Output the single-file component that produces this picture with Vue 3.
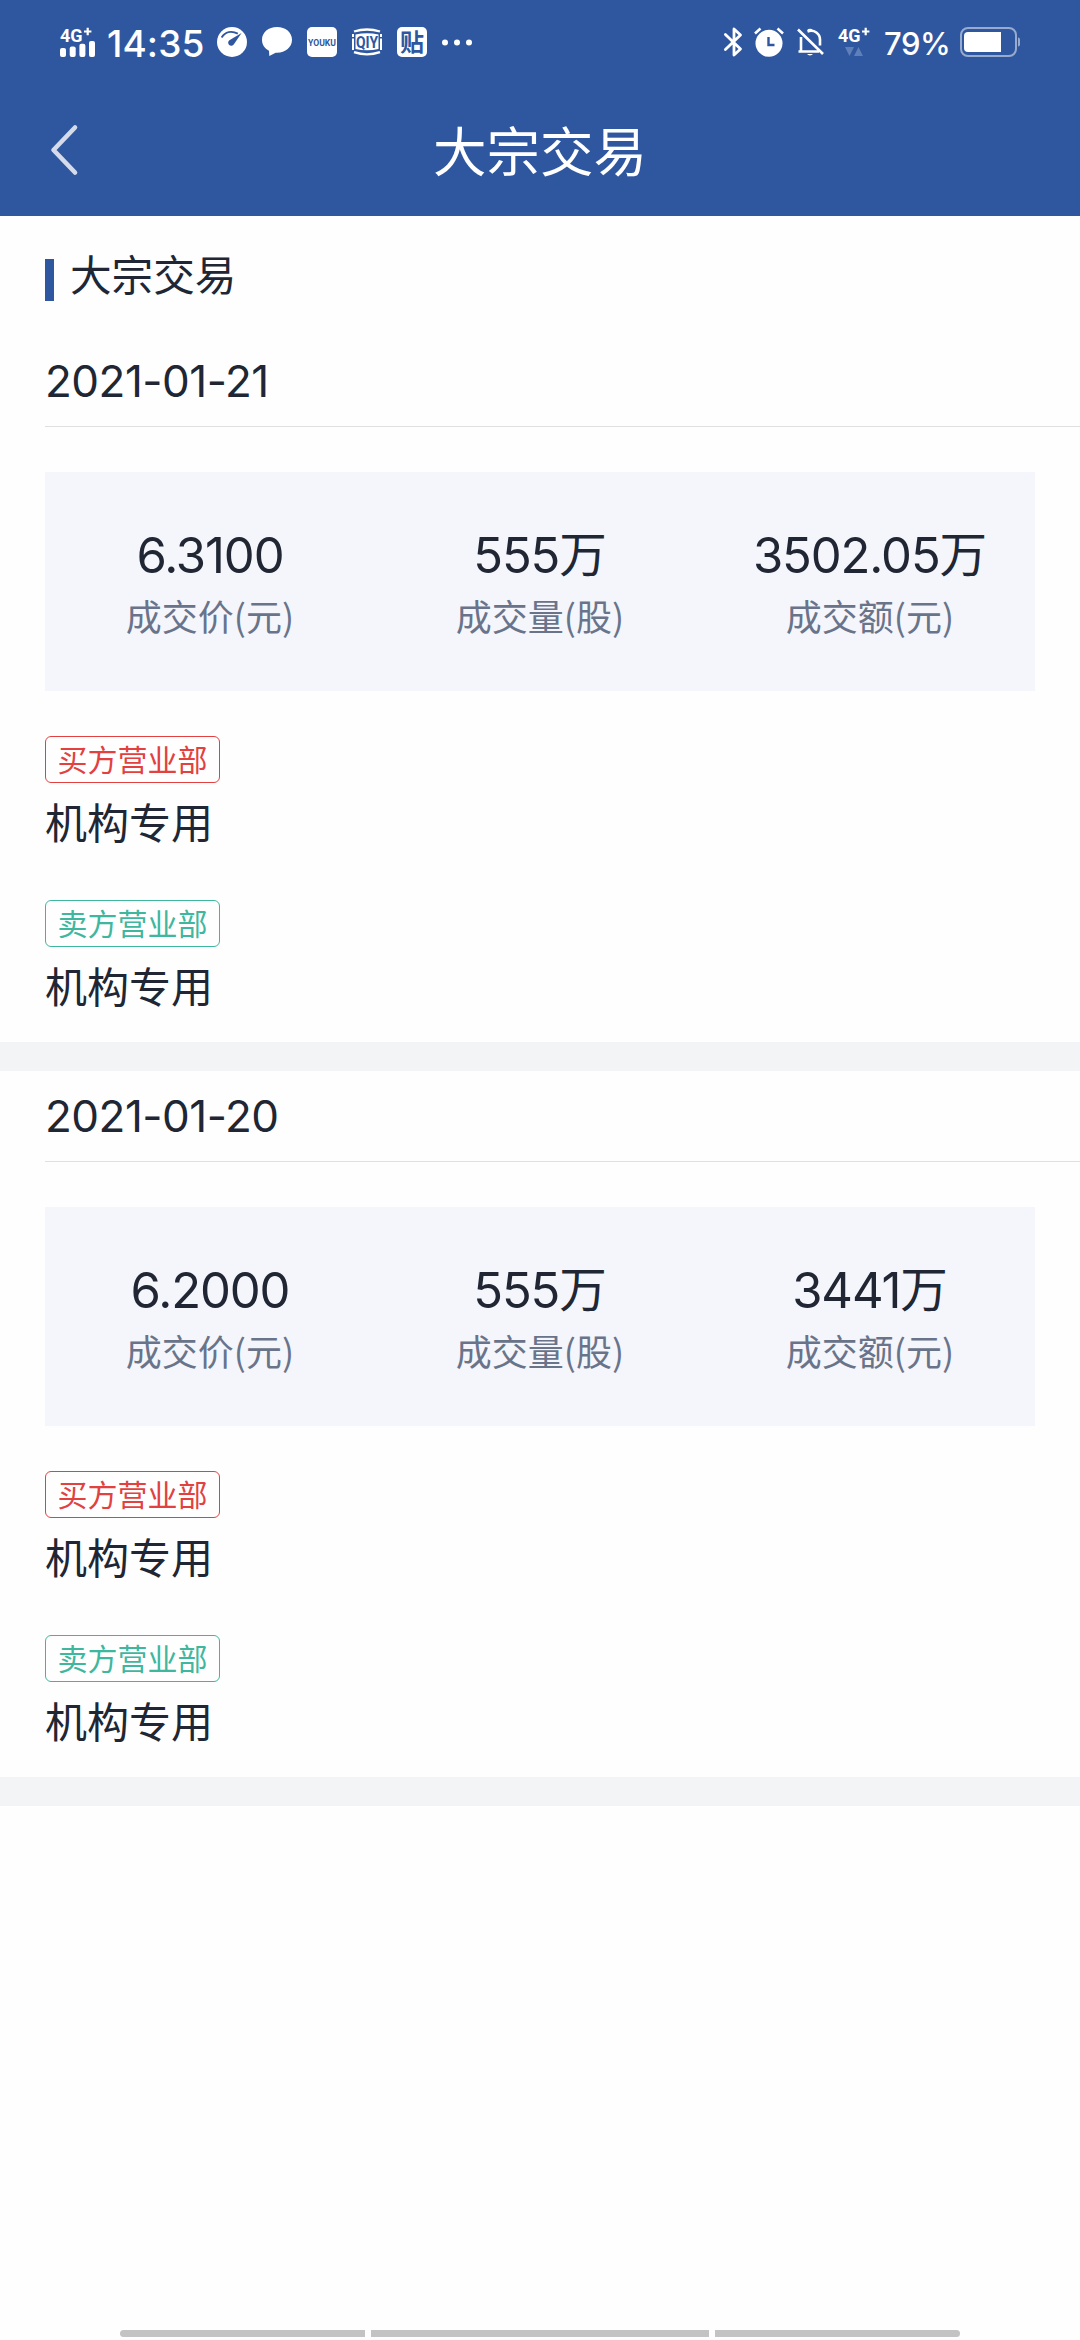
<script setup>
const records = [
  {
    date: '2021-01-21',
    stats: [
      { value: '6.3100', unit: '', label: '成交价(元)' },
      { value: '555', unit: '万', label: '成交量(股)' },
      { value: '3502.05', unit: '万', label: '成交额(元)' }
    ],
    buyer: '机构专用',
    seller: '机构专用'
  },
  {
    date: '2021-01-20',
    stats: [
      { value: '6.2000', unit: '', label: '成交价(元)' },
      { value: '555', unit: '万', label: '成交量(股)' },
      { value: '3441', unit: '万', label: '成交额(元)' }
    ],
    buyer: '机构专用',
    seller: '机构专用'
  }
]
</script>

<template>
  <div class="screen">
    <header class="header">
      <div class="status">
        <div class="status-left">
          <svg class="signal" width="35" height="30" viewBox="0 0 35 30" fill="#fff">
            <text x="0" y="14.600" font-size="19" font-weight="700" textLength="22.500" lengthAdjust="spacingAndGlyphs">4G</text>
            <path d="M24 4.500h7.400M27.700 .8v7.400" stroke="#fff" stroke-width="2.200" />
            <rect x="0" y="21" width="6" height="9" rx="2" />
            <rect x="9.700" y="19.500" width="6" height="10.500" rx="2" />
            <rect x="19.400" y="16.800" width="6" height="13.200" rx="2" />
            <rect x="29" y="14" width="6" height="16" rx="2" />
          </svg>
          <span class="clock">14:35</span>
          <div class="apps">
            <svg width="30" height="30" viewBox="0 0 30 30">
              <circle cx="15" cy="15" r="15" fill="#fff" />
              <path d="M4.600 10.500C8.300 4.800 14.500 3.500 20.800 6.600" fill="none" stroke="#2f579f" stroke-width="1.800" />
              <path d="M24.600 6.100L12.400 13.200a3.100 3.100 0 1 0 4.500 4.100z" fill="#2f579f" />
            </svg>
            <svg width="30" height="30" viewBox="0 0 30 30">
              <path d="M15 0C6.500 0 0 5.300 0 12.800c0 4.800 2.600 8.700 7 10.900L7.300 29l6.400-3.300H15c8.500 0 15-5.500 15-12.900S23.500 0 15 0z" fill="#fff" />
            </svg>
            <svg width="30" height="30" viewBox="0 0 30 30">
              <rect width="30" height="30" rx="5" fill="#fff" />
              <text x="1" y="18.500" font-size="9" font-weight="700" fill="#2f579f" textLength="28" lengthAdjust="spacingAndGlyphs">YOUKU</text>
            </svg>
            <svg width="30" height="30" viewBox="0 0 30 30">
              <path d="M2 4.500Q15 .5 28 4.500M2 25.200Q15 29.500 28 25.200" fill="none" stroke="#fff" stroke-width="2.300" />
              <path d="M3.500 7.600Q15 4.800 26.500 7.600V22Q15 24.700 3.500 22z" fill="#fff" />
              <path d="M1 7v3M1 11.500V23M29 7v3M29 11.500V23" stroke="#fff" stroke-width="2" />
              <text x="4" y="20.800" font-size="17" font-weight="700" fill="#2f579f" textLength="22" lengthAdjust="spacingAndGlyphs">QIY</text>
            </svg>
            <svg width="30" height="30" viewBox="0 0 30 30">
              <rect width="30" height="30" rx="5" fill="#fff" />
              <text class="cjk" x="3" y="23.800" font-size="24" font-weight="700" fill="#2f579f">贴</text>
            </svg>
            <svg width="30" height="30" viewBox="0 0 30 30" fill="#fff">
              <circle cx="3" cy="15.500" r="3" /><circle cx="15" cy="15.500" r="3" /><circle cx="27" cy="15.500" r="3" />
            </svg>
          </div>
        </div>
        <div class="status-right">
          <svg width="18" height="30" viewBox="0 0 18 30" fill="none" stroke="#fff" stroke-width="2.800" stroke-linejoin="round" stroke-linecap="round">
            <path d="M1.400 7.500L16.500 22 10 28V2l6.500 6L1.400 22.500" />
          </svg>
          <svg class="alarm" width="30" height="30" viewBox="0 0 30 30">
            <circle cx="15" cy="16.300" r="13.500" fill="#fff" />
            <path d="M1 6.500L6.500 1.500M29 6.500L23.500 1.500" stroke="#fff" stroke-width="2.600" />
            <path d="M14.500 10v8h6" fill="none" stroke="#2f579f" stroke-width="2.400" />
          </svg>
          <svg class="bell" width="27" height="30" viewBox="0 0 27 30" fill="none" stroke="#fff" stroke-width="2.600">
            <path d="M4 10V23.500M1.500 24.500H22M10.500 4.500C17.500 2 23 7 23 12.500V18.500M1 2.500L26 27" />
            <path d="M10 3.200a3.500 3 0 0 1 6 0zM10 27a3.500 3 0 0 0 6 0z" fill="#fff" stroke="none" />
          </svg>
          <svg class="network" width="32" height="30" viewBox="0 0 32 30" fill="#fff">
            <text x="0" y="14.600" font-size="19" font-weight="700" textLength="22.500" lengthAdjust="spacingAndGlyphs">4G</text>
            <path d="M24 4.500h7.400M27.700 .8v7.400" stroke="#fff" stroke-width="2.200" />
            <path d="M7 20h9l-4.500 9zM16 29h9l-4.500-9z" fill="#5f7fb8" />
          </svg>
          <span class="percent">79%</span>
          <svg class="battery" width="60" height="30" viewBox="0 0 60 30">
            <rect x="1" y="1" width="55" height="28" rx="7" fill="none" stroke="#97abcf" stroke-width="2" />
            <path d="M58 10.500q2 0 2 2v5q0 2-2 2z" fill="#97abcf" />
            <path d="M8 5H41V25H8q-4 0-4-4V9q0-4 4-4z" fill="#fff" />
          </svg>
        </div>
      </div>
      <div class="nav">
        <svg class="back" width="27" height="52" viewBox="0 0 27 52" fill="none" stroke="#d5dbea" stroke-width="4.600" stroke-linecap="round" stroke-linejoin="round">
          <path d="M25 3.500L3.500 26 25 48.500" />
        </svg>
        <h1>大宗交易</h1>
      </div>
    </header>

    <h2 class="heading"><i></i><span>大宗交易</span></h2>

    <section v-for="record in records" :key="record.date" class="record">
      <div class="date">{{ record.date }}</div>
      <div class="card">
        <div v-for="stat in record.stats" :key="stat.label" class="stat">
          <div class="value">
            <span class="number">{{ stat.value }}</span><span v-if="stat.unit" class="unit">{{ stat.unit }}</span>
          </div>
          <div class="label">{{ stat.label }}</div>
        </div>
      </div>
      <div class="party">
        <span class="tag buy">买方营业部</span>
        <div class="name">{{ record.buyer }}</div>
      </div>
      <div class="party">
        <span class="tag sell">卖方营业部</span>
        <div class="name">{{ record.seller }}</div>
      </div>
    </section>

    <footer class="gesture"><i></i><i></i><i></i></footer>
  </div>
</template>

<style>
body {
  background: #fefefe;
}
</style>

<style scoped>
.screen {
  display: flex;
  flex-direction: column;
  width: 1080px;
  height: 2340px;
  overflow: hidden;
  background: #fefefe;
  color: #202633;
  font-family: "Noto Sans CJK SC", sans-serif;
}
svg {
  display: block;
  flex: none;
  overflow: visible;
}
svg text {
  font-family: Roboto, sans-serif;
}
svg text.cjk {
  font-family: "Noto Sans CJK SC", sans-serif;
}
.header {
  height: 216px;
  flex: none;
  background: #2f579f;
  color: #fff;
}
.status {
  display: flex;
  justify-content: space-between;
  height: 84px;
  padding: 0 60px;
}
.status-left,
.status-right,
.apps {
  display: flex;
  align-items: center;
}
.clock {
  width: 97px;
  margin: 4px 13px 0 12px;
  font: 500 37px/44px Inter, sans-serif;
  letter-spacing: 0.1px;
  white-space: nowrap;
}
.apps {
  gap: 15px;
}
.alarm {
  margin-left: 12px;
}
.bell {
  margin-left: 13px;
}
.network {
  margin-left: 14px;
}
.percent {
  width: 64px;
  margin: 3px 12px 0 14px;
  font: 500 31px/40px Inter, sans-serif;
  letter-spacing: -0.5px;
  white-space: nowrap;
}
.nav {
  display: flex;
  align-items: center;
  height: 132px;
  padding: 0 50px;
}
.back {
  margin-right: -27px;
}
.nav h1 {
  flex: 1;
  margin: 0 0 3px;
  text-align: center;
  font-size: 53.5px;
  line-height: 80px;
  font-weight: 400;
}
.heading {
  display: flex;
  align-items: center;
  height: 120px;
  flex: none;
  margin: 0;
  padding-left: 45px;
  font-size: 41.6px;
  font-weight: 400;
}
.heading i {
  width: 9px;
  height: 42px;
  margin: 7px 16px 0 0;
  background: #2f579f;
}
.heading span {
  margin-bottom: 6px;
}
.record {
  flex: none;
  border-bottom: 29.5px solid #f3f4f6;
  padding: 0 45px 15px;
}
.date {
  height: 90px;
  margin-right: -45px;
  border-bottom: 1px solid #dfe0e2;
  font: 400 44px/91px Inter, sans-serif;
  letter-spacing: -0.5px;
}
.card {
  display: flex;
  height: 219px;
  margin: 45px 0;
  padding-top: 50px;
  box-sizing: border-box;
  background: #f5f6fb;
  text-align: center;
}
.stat {
  flex: 1;
}
.value {
  display: flex;
  justify-content: center;
  height: 65px;
  line-height: 67px;
}
.number {
  font-family: Inter, sans-serif;
  font-size: 49px;
  letter-spacing: -1.1px;
}
.unit {
  font-size: 47.5px;
  line-height: 60px;
}
.label {
  font-size: 36px;
  line-height: 57px;
  color: #69748b;
}
.party + .party {
  margin-top: 37px;
}
.tag {
  display: flex;
  align-items: center;
  justify-content: center;
  width: 175px;
  height: 47px;
  box-sizing: border-box;
  border: 1px solid;
  border-radius: 6px;
  font-size: 30px;
  line-height: 42px;
  padding-bottom: 3px;
}
.buy {
  color: #e2413f;
}
.sell {
  color: #3fb79e;
}
.name {
  height: 80px;
  font-size: 42px;
  line-height: 76px;
}
.gesture {
  display: flex;
  justify-content: center;
  gap: 6px;
  margin: auto 0 3px;
}
.gesture i {
  width: 245px;
  height: 7px;
  background: #c3c3c3;
}
.gesture i:nth-child(2) {
  width: 338px;
}
.gesture i:first-child {
  border-radius: 4px 0 0 4px;
}
.gesture i:last-child {
  border-radius: 0 4px 4px 0;
}
</style>
